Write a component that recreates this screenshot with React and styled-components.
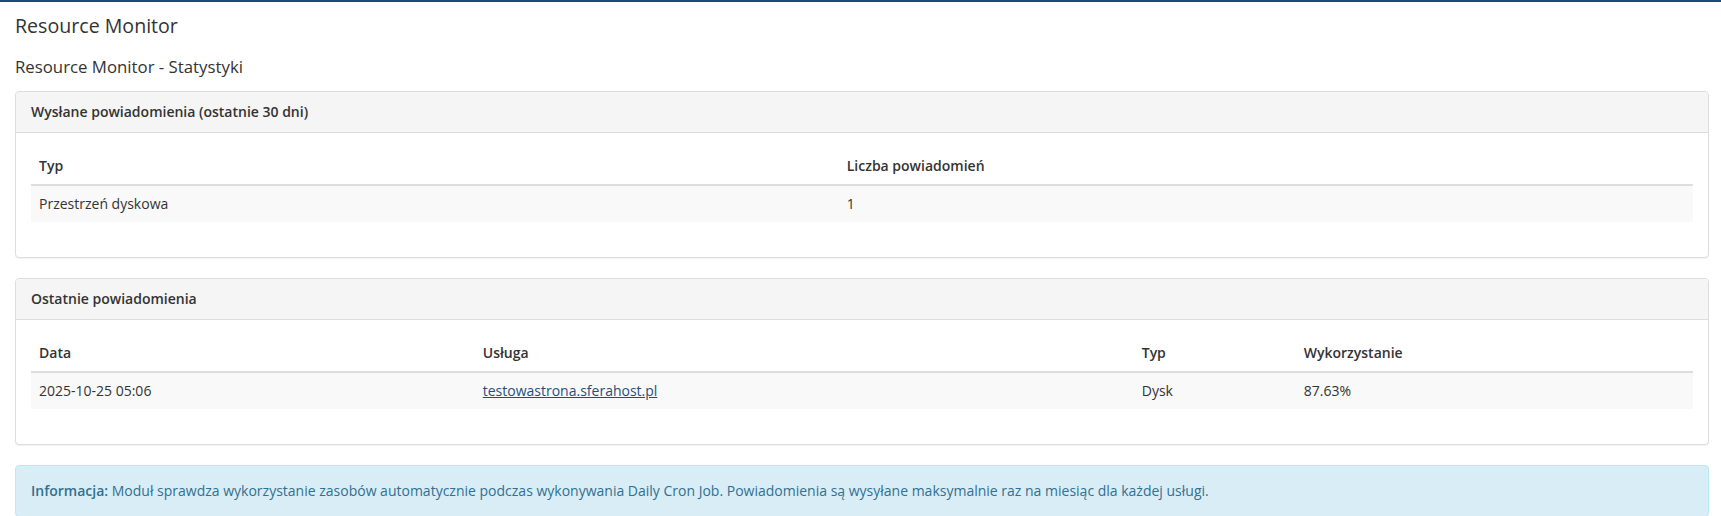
import React from "react";
import styled, { createGlobalStyle } from "styled-components";

const Global = createGlobalStyle`
  html, body { margin: 0; padding: 0; background: #fff; }
  body {
    font-family: "Open Sans", "Liberation Sans", Arial, sans-serif;
    font-size: 14px;
    line-height: 1.42857;
    color: #333;
  }
  * { box-sizing: border-box; }
`;

const Page = styled.div`
  border-top: 2px solid #1a4a7c;
  padding: 0 12px 20px 15px;
`;

const Title = styled.h1`
  margin: 13px 0 0;
  font-size: 19.6px;
  font-weight: 400;
  line-height: 22px;
  color: #333;
`;

const Subtitle = styled.h2`
  margin: 21px 0 15px;
  font-size: 16.8px;
  font-weight: 400;
  line-height: 18px;
  color: #333;
`;

const Panel = styled.section`
  border: 1px solid #ddd;
  border-radius: 4px;
  background: #fff;
  margin-bottom: 20px;
  box-shadow: 0 1px 1px rgba(0, 0, 0, 0.05);
`;

const PanelHeading = styled.div`
  background: #f5f5f5;
  border-bottom: 1px solid #ddd;
  border-radius: 3px 3px 0 0;
  padding: 10px 15px;
  font-weight: 600;
  color: #333;
`;

const PanelBody = styled.div`
  padding: 15px;
`;

const Table = styled.table`
  width: 100%;
  border-collapse: collapse;
  border-spacing: 0;
  margin-bottom: 20px;
`;

const Th = styled.th`
  text-align: left;
  padding: 8px;
  font-weight: 600;
  border-bottom: 2px solid #ddd;
  width: ${(p) => p.$w || "auto"};
`;

const Row = styled.tr`
  background: ${(p) => (p.$striped ? "#f9f9f9" : "transparent")};
`;

const Td = styled.td`
  padding: 8px;
  border-top: 1px solid #ddd;
`;

const Link = styled.a`
  color: #1f4f80;
  text-decoration: underline;
`;

const Alert = styled.div`
  background: #d9edf7;
  border: 1px solid #bce8f1;
  border-radius: 4px;
  color: #31708f;
  padding: 15px;
`;

const Strong = styled.strong`
  font-weight: 600;
`;

export default function App() {
  return (
    <>
      <Global />
      <Page>
        <Title>Resource Monitor</Title>
        <Subtitle>Resource Monitor - Statystyki</Subtitle>

        <Panel>
          <PanelHeading>Wysłane powiadomienia (ostatnie 30 dni)</PanelHeading>
          <PanelBody>
            <Table>
              <thead>
                <tr>
                  <Th $w="48.6%">Typ</Th>
                  <Th>Liczba powiadomień</Th>
                </tr>
              </thead>
              <tbody>
                <Row $striped>
                  <Td>Przestrzeń dyskowa</Td>
                  <Td>1</Td>
                </Row>
              </tbody>
            </Table>
          </PanelBody>
        </Panel>

        <Panel>
          <PanelHeading>Ostatnie powiadomienia</PanelHeading>
          <PanelBody>
            <Table>
              <thead>
                <tr>
                  <Th $w="26.7%">Data</Th>
                  <Th $w="39.65%">Usługa</Th>
                  <Th $w="9.75%">Typ</Th>
                  <Th>Wykorzystanie</Th>
                </tr>
              </thead>
              <tbody>
                <Row $striped>
                  <Td>2025-10-25 05:06</Td>
                  <Td>
                    <Link href="#">testowastrona.sferahost.pl</Link>
                  </Td>
                  <Td>Dysk</Td>
                  <Td>87.63%</Td>
                </Row>
              </tbody>
            </Table>
          </PanelBody>
        </Panel>

        <Alert>
          <Strong>Informacja:</Strong> Moduł sprawdza wykorzystanie zasobów
          automatycznie podczas wykonywania Daily Cron Job. Powiadomienia są
          wysyłane maksymalnie raz na miesiąc dla każdej usługi.
        </Alert>
      </Page>
    </>
  );
}
